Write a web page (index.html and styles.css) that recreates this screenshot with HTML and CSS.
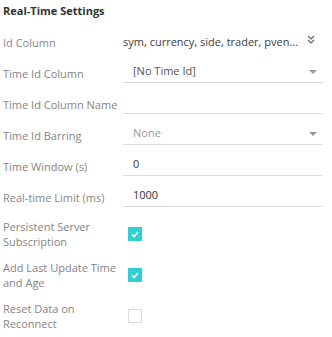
FILE: index.html
```html
<!DOCTYPE html>
<html lang="en">
<head>
<meta charset="UTF-8">
<title>Real-Time Settings</title>
<link rel="stylesheet" href="styles.css">
</head>
<body>

<div class="panel">
  <div class="title">Real-Time Settings</div>

  <div class="field">
    <div class="label">Id Column</div>
    <div class="multi">
      <span class="multi-text">sym, currency, side, trader, pven...</span>
      <svg class="chevrons" width="8" height="9" viewBox="0 0 8 9">
        <path d="M1 1 L4 4 L7 1 M1 5 L4 8 L7 5" fill="none" stroke="#5a6170" stroke-width="1.2"/>
      </svg>
    </div>
  </div>

  <div class="field">
    <div class="label">Time Id Column</div>
    <div class="input select">[No Time Id]<span class="caret"></span></div>
  </div>

  <div class="field">
    <div class="label">Time Id Column Name</div>
    <div class="input"></div>
  </div>

  <div class="field">
    <div class="label">Time Id Barring</div>
    <div class="input select disabled">None<span class="caret"></span></div>
  </div>

  <div class="field">
    <div class="label">Time Window (s)</div>
    <div class="input value">0</div>
  </div>

  <div class="field">
    <div class="label">Real-time Limit (ms)</div>
    <div class="input value">1000</div>
  </div>

  <div class="checks">
    <div class="label">Persistent Server Subscription</div>
    <div class="check on"></div>
    <div class="label">Add Last Update Time and Age</div>
    <div class="check on"></div>
    <div class="label">Reset Data on Reconnect</div>
    <div class="check"></div>
  </div>
</div>

</body>
</html>
```

FILE: styles.css
```css
body {
  margin: 0;
  font-family: "Open Sans", sans-serif;
  font-size: 11px;
  color: #333;
  background: #fff;
}
.panel {
  width: 320px;
  padding: 0 9px 0 3px;
}
.title {
  height: 21px;
  line-height: 22px;
  font-weight: 700;
  color: #333;
}
.field {
  display: grid;
  grid-template-columns: 120px 200px;
  align-items: end;
  height: 31px;
}
.label {
  color: #858585;
  line-height: 16px;
  padding-bottom: 1px;
  white-space: nowrap;
}
.multi {
  display: flex;
  align-items: center;
  justify-content: space-between;
  height: 22px;
  padding-right: 8px;
  color: #3d3d3d;
  white-space: nowrap;
  overflow: hidden;
}
.chevrons {
  margin-top: -3px;
}
.input {
  position: relative;
  height: 21px;
  line-height: 20px;
  padding-left: 10px;
  border-bottom: 1px solid #dcdcdc;
  color: #555;
}
.input.disabled {
  color: #999;
}
.input.value {
  color: #333;
}
.caret {
  position: absolute;
  right: 6px;
  top: 9px;
  border-left: 4px solid transparent;
  border-right: 4px solid transparent;
  border-top: 4px solid #999;
}
.checks {
  display: grid;
  grid-template-columns: 120px 200px;
  row-gap: 11px;
  align-items: center;
  margin-top: 12px;
}
.checks .label {
  line-height: 15px;
  padding: 0;
  white-space: normal;
}
.check {
  width: 12px;
  height: 12px;
  margin-left: 5px;
  border: 1px solid #dcdcdc;
}
.check.on {
  border-color: #2fcfd2;
  background: #2fcfd2 url("data:image/svg+xml,%3Csvg xmlns='http://www.w3.org/2000/svg' width='12' height='12'%3E%3Cpath d='M3 6.5 L5 8.5 L9 4' fill='none' stroke='white' stroke-width='1.6'/%3E%3C/svg%3E") no-repeat center;
}
```
